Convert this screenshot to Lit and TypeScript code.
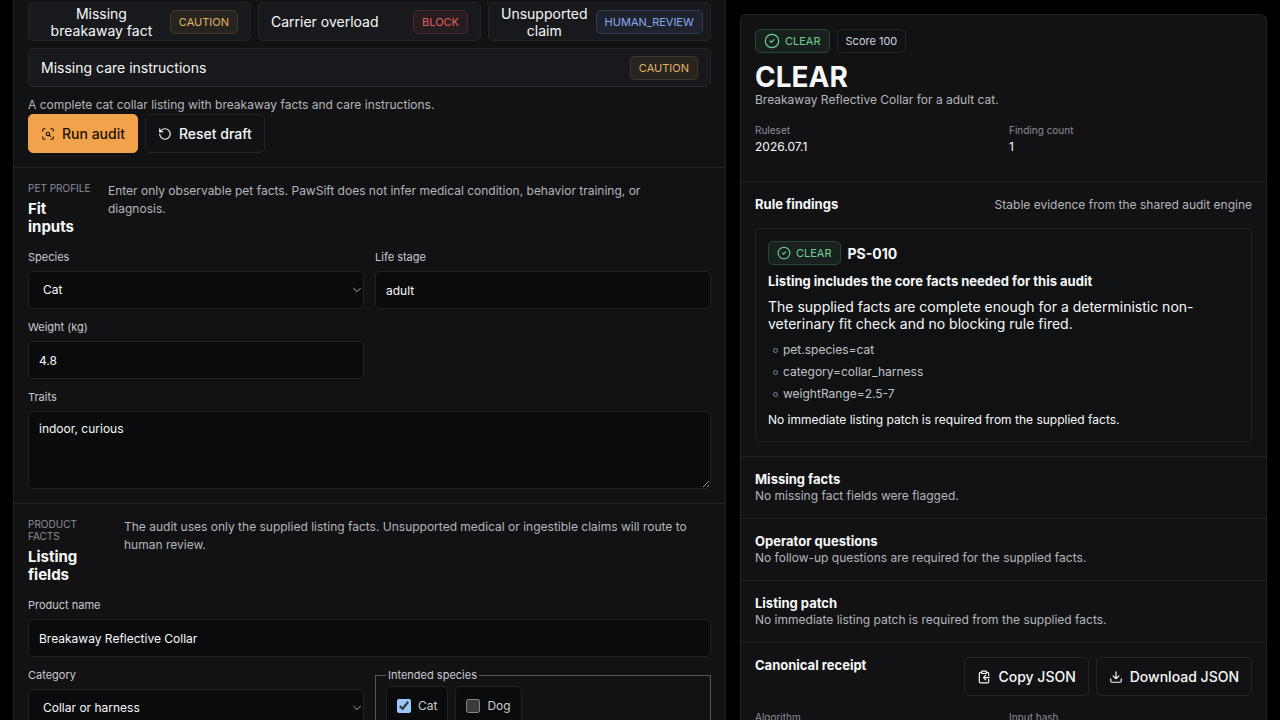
import { LitElement, html, css, svg } from "lit";
import { customElement } from "lit/decorators.js";

const icon = (body: unknown, cls = "icon") => html`<svg class=${cls} viewBox="0 0 24 24" fill="none" stroke="currentColor" stroke-width="2" stroke-linecap="round" stroke-linejoin="round" aria-hidden="true">${body}</svg>`;

const scanIcon = svg`<path d="M3 7V5a2 2 0 0 1 2-2h2M17 3h2a2 2 0 0 1 2 2v2M21 17v2a2 2 0 0 1-2 2h-2M7 21H5a2 2 0 0 1-2-2v-2"/><circle cx="12" cy="12" r="3"/><path d="m16 16-1.9-1.9"/>`;
const resetIcon = svg`<path d="M3 12a9 9 0 1 0 9-9 9.75 9.75 0 0 0-6.74 2.74L3 8"/><path d="M3 3v5h5"/>`;
const checkIcon = svg`<circle cx="12" cy="12" r="10"/><path d="m9 12 2 2 4-4"/>`;
const copyIcon = svg`<rect x="8" y="2" width="8" height="4" rx="1"/><path d="M16 4h2a2 2 0 0 1 2 2v4M20 16v4a2 2 0 0 1-2 2H6a2 2 0 0 1-2-2V6a2 2 0 0 1 2-2h2"/><path d="M21 13H11M15 9l-4 4 4 4"/>`;
const downloadIcon = svg`<path d="M12 3v12M7 10l5 5 5-5M21 15v4a2 2 0 0 1-2 2H5a2 2 0 0 1-2-2v-4"/>`;
const chevronIcon = svg`<path d="m4 8 8 8 8-8"/>`;

const scenarios = [
  { name: "Missing breakaway fact", verdict: "CAUTION", tone: "caution" },
  { name: "Carrier overload", verdict: "BLOCK", tone: "block" },
  { name: "Unsupported claim", verdict: "HUMAN_REVIEW", tone: "review" },
  { name: "Missing care instructions", verdict: "CAUTION", tone: "caution" },
];

const notes = [
  { title: "Missing facts", text: "No missing fact fields were flagged." },
  { title: "Operator questions", text: "No follow-up questions are required for the supplied facts." },
  { title: "Listing patch", text: "No immediate listing patch is required from the supplied facts." },
];

@customElement("app-root")
export class AppRoot extends LitElement {
  static styles = css`
    :host { display: block; height: 100vh; overflow-y: auto; scrollbar-width: none; background: #000; color: #f7f8f8; font: 14px/17px Inter, sans-serif; color-scheme: dark; }
    *, *::before { box-sizing: border-box; }
    h1, h2, h3, p, ul, dl, dd { margin: 0; padding: 0; }
    button, input, select, textarea { font: inherit; color: inherit; margin: 0; }
    .page { display: grid; grid-template-columns: minmax(0, 23fr) minmax(0, 17fr); gap: 14px; padding: 0 13px; align-items: start; }
    .panel { background: #121214; border: 1px solid #212224; }
    .editor { border-top: 0; }
    .result { margin-top: 14px; border-radius: 6px; }
    .section { padding: 14px; border-top: 1px solid #212224; }
    .section:first-child { border-top: 0; }
    .intro { padding-top: 2px; }
    .scenarios { display: grid; grid-template-columns: repeat(3, minmax(0, 1fr)); gap: 7px; }
    .scenario { display: flex; align-items: center; justify-content: space-between; gap: 8px; height: 39px; padding: 0 12px; border: 1px solid #242528; border-radius: 5px; background: #18191c; text-align: center; font-size: 14px; line-height: 17px; }
    .scenario:nth-child(4) { grid-column: 1 / -1; }
    .badge { display: inline-flex; align-items: center; gap: 5px; flex: none; height: 24px; padding: 0 8px; border: 1px solid #242528; border-radius: 5px; font-size: 11px; line-height: 14px; color: #d0d6e0; }
    .caution { color: #e0b465; background: #27231f; border-color: #453a2a; }
    .block { color: #e0605f; background: #271c1f; border-color: #482a2d; }
    .review { color: #8aa8f0; background: #1e232d; border-color: #303b55; }
    .clear { color: #6fcf97; background: #18211d; border-color: #28483a; }
    .muted { color: #b4b6ba; font-size: 12px; line-height: 18px; }
    .intro .muted { margin-top: 9px; }
    .actions { display: flex; gap: 7px; }
    .button { display: inline-flex; align-items: center; gap: 7px; height: 39px; padding: 0 12px; border: 1px solid #242528; border-radius: 5px; background: #121214; font-size: 14px; font-weight: 500; line-height: 18px; white-space: nowrap; }
    .primary { background: #f2a24b; border-color: #f2a24b; color: #1b1206; }
    .icon { width: 14px; height: 14px; flex: none; }
    .check { width: 16px; height: 16px; flex: none; stroke-width: 1.8; }
    .finding-head .check { width: 14px; height: 14px; }
    .head { display: flex; justify-content: space-between; gap: 14px; margin-bottom: 14px; }
    .lead { justify-content: flex-start; }
    .lead .muted { max-width: 590px; }
    .heading-short { flex: 0 0 66px; }
    .heading-long { flex: 0 0 82px; }
    .eyebrow { color: #8a8f98; font-size: 10px; line-height: 12px; text-transform: uppercase; margin-bottom: 6px; }
    h2 { font-size: 15px; line-height: 18px; font-weight: 700; }
    h3 { font-size: 13px; line-height: 17px; font-weight: 700; }
    .code { font-size: 14px; }
    .fields { display: grid; grid-template-columns: repeat(2, minmax(0, 1fr)); gap: 11px; align-items: start; }
    .field { display: grid; gap: 7px; font-size: 11px; line-height: 14px; color: #c9cbd0; }
    .wide { grid-column: 1 / -1; }
    .control { width: 100%; height: 38px; padding: 0 10px; border: 1px solid #202225; border-radius: 5px; background: #0a0b0d; color: #f7f8f8; font-size: 12px; line-height: 18px; outline: 0; }
    textarea.control { display: block; height: 78px; padding-top: 8px; resize: vertical; }
    .select { display: grid; align-items: center; }
    .select > * { grid-area: 1 / 1; }
    .select .control { appearance: none; padding: 0 14px; }
    .chevron { width: 10px; height: 10px; margin-right: 2px; justify-self: end; pointer-events: none; }
    .species { display: flex; gap: 7px; min-width: 0; margin: 0; padding: 4px 10px 10px; border: 1px solid #55565a; color: #c9cbd0; font-size: 12px; line-height: 14px; }
    legend { padding: 0 2px; font-size: 11px; }
    .option { display: flex; align-items: center; gap: 7px; height: 40px; padding: 0 10px; border: 1px solid #202225; border-radius: 5px; background: #0a0b0d; }
    .option input { width: 14px; height: 14px; }
    .badges { display: flex; gap: 7px; }
    h1 { margin-top: 10px; font-size: 28px; line-height: 28px; font-weight: 700; }
    .facts { display: grid; grid-template-columns: repeat(2, minmax(0, 1fr)); gap: 11px; margin: 14px 0 13px; }
    .head + .facts { margin-top: 0; }
    dt { color: #8a8f98; font-size: 10px; line-height: 14px; }
    dd { margin-top: 3px; font-size: 12px; line-height: 14px; }
    .finding { display: grid; gap: 8px; padding: 12px; border: 1px solid #202225; border-radius: 5px; background: #101113; }
    .finding-head { display: flex; align-items: center; gap: 7px; }
    .evidence { display: grid; gap: 4px; list-style: none; padding: 1px 0 0 5px; color: #c2c4c8; font-size: 12px; line-height: 18px; }
    .evidence li { display: flex; align-items: center; gap: 5px; }
    .evidence li::before { content: ""; width: 5px; height: 5px; border: 1px solid #85878c; border-radius: 50%; }
    .patch { font-size: 12px; line-height: 18px; }
    .note { line-height: 16px; }
  `;

  render() {
    const clear = html`<span class="badge clear">${icon(checkIcon, "check")}CLEAR</span>`;
    return html`
      <main class="page">
        <form class="panel editor" @submit=${(e: Event) => e.preventDefault()}>
          <section class="section intro">
            <div class="scenarios">
              ${scenarios.map((s) => html`<button type="button" class="scenario"><span>${s.name}</span><span class="badge ${s.tone}">${s.verdict}</span></button>`)}
            </div>
            <p class="muted">A complete cat collar listing with breakaway facts and care instructions.</p>
            <div class="actions">
              <button type="submit" class="button primary">${icon(scanIcon)}Run audit</button>
              <button type="button" class="button">${icon(resetIcon)}Reset draft</button>
            </div>
          </section>
          <section class="section">
            <div class="head lead">
              <div class="heading-short"><p class="eyebrow">Pet profile</p><h2>Fit inputs</h2></div>
              <p class="muted">Enter only observable pet facts. PawSift does not infer medical condition, behavior training, or diagnosis.</p>
            </div>
            <div class="fields">
              <label class="field">Species<span class="select"><select class="control"><option>Cat</option><option>Dog</option></select>${icon(chevronIcon, "chevron")}</span></label>
              <label class="field">Life stage<input class="control" value="adult"></label>
              <label class="field">Weight (kg)<input class="control" inputmode="decimal" value="4.8"></label>
              <label class="field wide">Traits<textarea class="control" .value=${"indoor, curious"}></textarea></label>
            </div>
          </section>
          <section class="section">
            <div class="head lead">
              <div class="heading-long"><p class="eyebrow">Product facts</p><h2>Listing fields</h2></div>
              <p class="muted">The audit uses only the supplied listing facts. Unsupported medical or ingestible claims will route to human review.</p>
            </div>
            <div class="fields">
              <label class="field wide">Product name<input class="control" value="Breakaway Reflective Collar"></label>
              <label class="field">Category<span class="select"><select class="control"><option>Collar or harness</option></select>${icon(chevronIcon, "chevron")}</span></label>
              <fieldset class="species">
                <legend>Intended species</legend>
                <label class="option"><input type="checkbox" checked>Cat</label>
                <label class="option"><input type="checkbox">Dog</label>
              </fieldset>
            </div>
          </section>
        </form>
        <article class="panel result">
          <section class="section">
            <div class="badges">${clear}<span class="badge">Score 100</span></div>
            <h1>CLEAR</h1>
            <p class="muted">Breakaway Reflective Collar for a adult cat.</p>
            <dl class="facts">
              <div><dt>Ruleset</dt><dd>2026.07.1</dd></div>
              <div><dt>Finding count</dt><dd>1</dd></div>
            </dl>
          </section>
          <section class="section">
            <div class="head"><h3>Rule findings</h3><p class="muted">Stable evidence from the shared audit engine</p></div>
            <div class="finding">
              <div class="finding-head">${clear}<h3 class="code">PS-010</h3></div>
              <h3>Listing includes the core facts needed for this audit</h3>
              <p>The supplied facts are complete enough for a deterministic non-veterinary fit check and no blocking rule fired.</p>
              <ul class="evidence"><li>pet.species=cat</li><li>category=collar_harness</li><li>weightRange=2.5-7</li></ul>
              <p class="patch">No immediate listing patch is required from the supplied facts.</p>
            </div>
          </section>
          ${notes.map((n) => html`<section class="section"><h3>${n.title}</h3><p class="muted note">${n.text}</p></section>`)}
          <section class="section">
            <div class="head">
              <h3>Canonical receipt</h3>
              <div class="actions">
                <button type="button" class="button">${icon(copyIcon)}Copy JSON</button>
                <button type="button" class="button">${icon(downloadIcon)}Download JSON</button>
              </div>
            </div>
            <dl class="facts">
              <div><dt>Algorithm</dt></div>
              <div><dt>Input hash</dt></div>
            </dl>
          </section>
        </article>
      </main>
    `;
  }
}
